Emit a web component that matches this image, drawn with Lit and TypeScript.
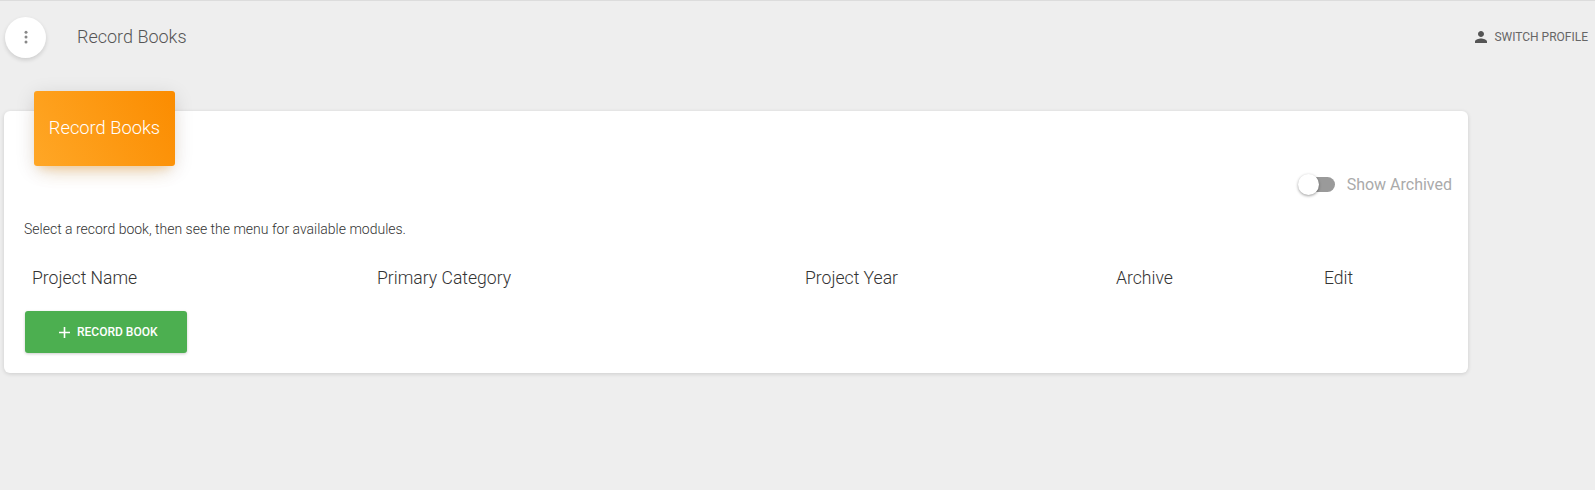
import { LitElement, html, css } from "lit";
import { customElement } from "lit/decorators.js";

@customElement("app-root")
export class AppRoot extends LitElement {
  static styles = css`
    :host {
      display: block;
      height: 490px;
      overflow: hidden;
      background: #eeeeee;
      font-family: Roboto, "Noto Sans", sans-serif;
      border-top: 1px solid #dcdcdc;
      box-sizing: border-box;
    }
    .topbar {
      display: flex;
      align-items: center;
      height: 72px;
      padding-left: 5px;
      box-sizing: border-box;
    }
    .fab {
      width: 41px;
      height: 41px;
      border-radius: 50%;
      background: #fff;
      box-shadow: 0 2px 4px rgba(0, 0, 0, 0.14);
      display: flex;
      align-items: center;
      justify-content: center;
      flex: none;
    }
    .title {
      margin-left: 31px;
      margin-bottom: 2px;
      font-size: 18px;
      font-weight: 300;
      color: #555;
      flex: 1;
    }
    .switch {
      display: flex;
      align-items: center;
      gap: 4px;
      font-size: 12px;
      color: #666;
      padding-right: 7px;
      margin-bottom: 1px;
    }
    .card {
      position: relative;
      margin: 38px 0 0 4px;
      width: 1464px;
      height: 262px;
      background: #fff;
      border-radius: 6px;
      box-shadow: 0 1px 4px rgba(0, 0, 0, 0.14);
      padding: 0 20px;
      box-sizing: border-box;
    }
    .badge {
      position: absolute;
      left: 30px;
      top: -20px;
      width: 141px;
      height: 75px;
      border-radius: 3px;
      background: linear-gradient(60deg, #ffa726, #fb8c00);
      box-shadow: 0 12px 20px -10px rgba(255, 152, 0, 0.28), 0 4px 20px 0 rgba(0, 0, 0, 0.12), 0 7px 8px -5px rgba(255, 152, 0, 0.2);
      color: #fff;
      font-size: 18.3px;
      font-weight: 300;
      padding-bottom: 2px;
      box-sizing: border-box;
      display: flex;
      align-items: center;
      justify-content: center;
    }
    .toggle-row {
      display: flex;
      justify-content: flex-end;
      align-items: center;
      gap: 12px;
      padding-top: 62px;
      margin-right: -4px;
      height: 22px;
      box-sizing: content-box;
      font-size: 16px;
      font-weight: 400;
      color: #aaaaaa;
    }
    .toggle {
      position: relative;
      width: 30px;
      height: 15px;
      border-radius: 8px;
      background: #9a9a9a;
    }
    .knob {
      position: absolute;
      left: -7px;
      top: -3px;
      width: 21px;
      height: 21px;
      border-radius: 50%;
      background: #fff;
      box-shadow: 0 1px 3px rgba(0, 0, 0, 0.4);
    }
    .hint {
      margin-top: 26px;
      font-size: 14px;
      font-weight: 300;
      color: #333;
      line-height: 16px;
    }
    .cols {
      display: grid;
      grid-template-columns: 345px 428px 311px 208px 1fr;
      margin-top: 29px;
      font-size: 17.6px;
      font-weight: 300;
      color: #333;
      line-height: 24px;
    }
    .cols span {
      padding-left: 8px;
    }
    .add {
      margin-top: 21px;
      width: 162px;
      height: 42px;
      margin-left: 1px;
      padding-left: 4px;
      box-sizing: border-box;
      border-radius: 3px;
      background: #4caf50;
      box-shadow: 0 1px 3px rgba(0, 0, 0, 0.2);
      color: #fff;
      font-size: 12px;
      font-weight: 500;
      display: flex;
      align-items: center;
      justify-content: center;
      gap: 7.5px;
    }
    svg {
      display: block;
    }
  `;

  render() {
    return html`
      <div class="topbar">
        <div class="fab">
          <svg width="18" height="18" viewBox="0 0 24 24" fill="#888">
            <circle cx="12" cy="5.5" r="2" />
            <circle cx="12" cy="12" r="2" />
            <circle cx="12" cy="18.5" r="2" />
          </svg>
        </div>
        <div class="title">Record Books</div>
        <div class="switch">
          <svg width="18" height="18" viewBox="0 0 24 24" fill="#555">
            <path d="M12 12c2.21 0 4-1.79 4-4s-1.79-4-4-4-4 1.79-4 4 1.79 4 4 4zm0 2c-2.67 0-8 1.34-8 4v2h16v-2c0-2.66-5.33-4-8-4z" />
          </svg>
          SWITCH PROFILE
        </div>
      </div>
      <div class="card">
        <div class="badge">Record Books</div>
        <div class="toggle-row">
          <div class="toggle"><div class="knob"></div></div>
          <span>Show Archived</span>
        </div>
        <div class="hint">Select a record book, then see the menu for available modules.</div>
        <div class="cols">
          <span>Project Name</span>
          <span>Primary Category</span>
          <span>Project Year</span>
          <span>Archive</span>
          <span>Edit</span>
        </div>
        <div class="add">
          <svg width="11" height="11" viewBox="0 0 11 11" stroke="#fff" stroke-width="1.6" fill="none">
            <path d="M5.5 0v11M0 5.5h11" />
          </svg>
          RECORD BOOK
        </div>
      </div>
    `;
  }
}
